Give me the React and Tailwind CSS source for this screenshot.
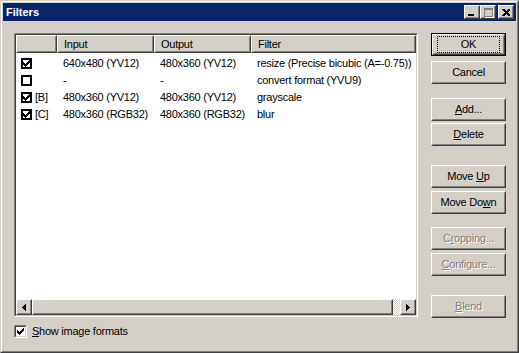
import React from 'react';

const rows = [
  { checked: true, tag: '', input: '640x480 (YV12)', output: '480x360 (YV12)', filter: 'resize (Precise bicubic (A=-0.75))' },
  { checked: false, tag: '', input: '-', output: '-', filter: 'convert format (YVU9)' },
  { checked: true, tag: '[B]', input: '480x360 (YV12)', output: '480x360 (YV12)', filter: 'grayscale' },
  { checked: true, tag: '[C]', input: '480x360 (RGB32)', output: '480x360 (RGB32)', filter: 'blur' },
];

// raised 3d box used by buttons, headers and scroll parts
function Raised({ className = '', children }) {
  return (
    <div className={`border border-t-white border-l-white border-r-[#404040] border-b-[#404040] ${className}`}>
      <div className="h-full w-full border border-t-[#d4d0c8] border-l-[#d4d0c8] border-r-[#808080] border-b-[#808080] flex items-center justify-center">
        {children}
      </div>
    </div>
  );
}

function Check({ size = 7 }) {
  return (
    <svg width={size} height={size} viewBox="0 0 7 7" shapeRendering="crispEdges">
      <path d="M6 0h1v3h-1v1h-1v1h-1v1h-1v1h-1v-1h-1v-1h-1v-3h1v1h1v1h1v-1h1v-1h1z" fill="#000" />
    </svg>
  );
}

function Btn({ children, def, disabled, className = '' }) {
  return (
    <div className={`w-[75px] h-[23px] ${def ? 'border border-black' : ''} ${className}`}>
      <Raised className="h-full w-full">
        {def ? (
          <div className="w-full h-full m-[3px] border border-dotted border-black flex items-center justify-center">
            {children}
          </div>
        ) : (
          <span className={disabled ? 'text-[#808080] [text-shadow:1px_1px_0_#fff]' : ''}>{children}</span>
        )}
      </Raised>
    </div>
  );
}

export default function App() {
  return (
    <div className="w-[519px] h-[353px] bg-[#d4d0c8] border border-t-[#d4d0c8] border-l-[#d4d0c8] border-r-[#404040] border-b-[#404040] font-['Liberation_Sans',Arial,sans-serif] text-[11px] tracking-[-0.25px] text-black leading-none select-none">
      <div className="h-full w-full border border-t-white border-l-white border-r-[#808080] border-b-[#808080] p-px flex flex-col">
        {/* title bar */}
        <div className="h-[18px] bg-[#0a246a] flex items-center pl-[3px] pr-[2px]">
          <span className="text-white font-bold text-[11px] tracking-normal flex-1">Filters</span>
          <Raised className="w-[16px] h-[14px] bg-[#d4d0c8]">
            <div className="w-[6px] h-[2px] bg-black mt-[6px] mr-[2px]" />
          </Raised>
          <Raised className="w-[16px] h-[14px] bg-[#d4d0c8]">
            <div className="w-[9px] h-[9px] border border-t-2 border-[#808080] shadow-[1px_1px_0_#fff]" />
          </Raised>
          <Raised className="w-[16px] h-[14px] bg-[#d4d0c8] ml-[2px]">
            <svg width="8" height="7" viewBox="0 0 8 7" shapeRendering="crispEdges">
              <path d="M0 0h2l2 2 2-2h2v1l-2.5 2.5 2.5 2.5v1h-2l-2-2-2 2h-2v-1l2.5-2.5-2.5-2.5z" fill="#000" />
            </svg>
          </Raised>
        </div>

        <div className="flex-1 flex pt-[12px] pl-[11px]">
          {/* left column */}
          <div className="w-[404px] flex flex-col">
            <div className="h-[284px] border border-t-[#808080] border-l-[#808080] border-r-white border-b-white">
              <div className="h-full w-full border border-t-[#404040] border-l-[#404040] border-r-[#d4d0c8] border-b-[#d4d0c8] bg-white flex flex-col">
                <div className="flex h-[18px] bg-[#d4d0c8]">
                  <Raised className="w-[41px] h-full" />
                  <Raised className="w-[97px] h-full">
                    <span className="w-full pl-[5px]">Input</span>
                  </Raised>
                  <Raised className="w-[97px] h-full">
                    <span className="w-full pl-[5px]">Output</span>
                  </Raised>
                  <Raised className="flex-1 h-full">
                    <span className="w-full pl-[5px]">Filter</span>
                  </Raised>
                </div>
                <div className="flex-1 pt-[2px]">
                  {rows.map((r, i) => (
                    <div key={i} className="flex h-[17px] items-center whitespace-nowrap">
                      <div className="w-[41px] flex items-center pl-[5px]">
                        <div className="w-[11px] h-[11px] border-2 border-black bg-white flex items-center justify-center">
                          {r.checked && <Check />}
                        </div>
                        <span className="ml-[3px]">{r.tag}</span>
                      </div>
                      <div className="w-[97px] pl-[6px]">{r.input}</div>
                      <div className="w-[97px] pl-[6px]">{r.output}</div>
                      <div className="flex-1 pl-[6px] overflow-hidden">{r.filter}</div>
                    </div>
                  ))}
                </div>
                {/* horizontal scrollbar */}
                <div className="h-[16px] flex bg-[#d4d0c8]">
                  <Raised className="w-[16px] h-full">
                    <svg width="4" height="7" viewBox="0 0 4 7" shapeRendering="crispEdges">
                      <path d="M4 0v7L0 3.5z" fill="#000" />
                    </svg>
                  </Raised>
                  <Raised className="flex-1 h-full" />
                  <div className="w-[7px] h-full bg-[repeating-conic-gradient(#fff_0_25%,#d4d0c8_0_50%)] bg-[length:2px_2px]" />
                  <Raised className="w-[16px] h-full">
                    <svg width="4" height="7" viewBox="0 0 4 7" shapeRendering="crispEdges">
                      <path d="M0 0v7l4-3.5z" fill="#000" />
                    </svg>
                  </Raised>
                </div>
              </div>
            </div>

            <div className="mt-[8px] flex items-center">
              <div className="w-[13px] h-[13px] border border-t-[#808080] border-l-[#808080] border-r-white border-b-white">
                <div className="w-full h-full border border-t-[#404040] border-l-[#404040] border-r-[#d4d0c8] border-b-[#d4d0c8] bg-white flex items-center justify-center">
                  <Check />
                </div>
              </div>
              <span className="ml-[5px]"><u>S</u>how image formats</span>
            </div>
          </div>

          {/* buttons */}
          <div className="ml-[13px] flex flex-col">
            <Btn def>OK</Btn>
            <Btn className="mt-[5px]">Cancel</Btn>
            <Btn className="mt-[14px]"><u>A</u>dd...</Btn>
            <Btn className="mt-[2px]"><u>D</u>elete</Btn>
            <Btn className="mt-[19px]">Move <u>U</u>p</Btn>
            <Btn className="mt-[3px]">Move Do<u>w</u>n</Btn>
            <Btn disabled className="mt-[13px]">C<u>r</u>opping...</Btn>
            <Btn disabled className="mt-[3px]"><u>C</u>onfigure...</Btn>
            <Btn disabled className="mt-[19px]"><u>B</u>lend</Btn>
          </div>
        </div>
      </div>
    </div>
  );
}
